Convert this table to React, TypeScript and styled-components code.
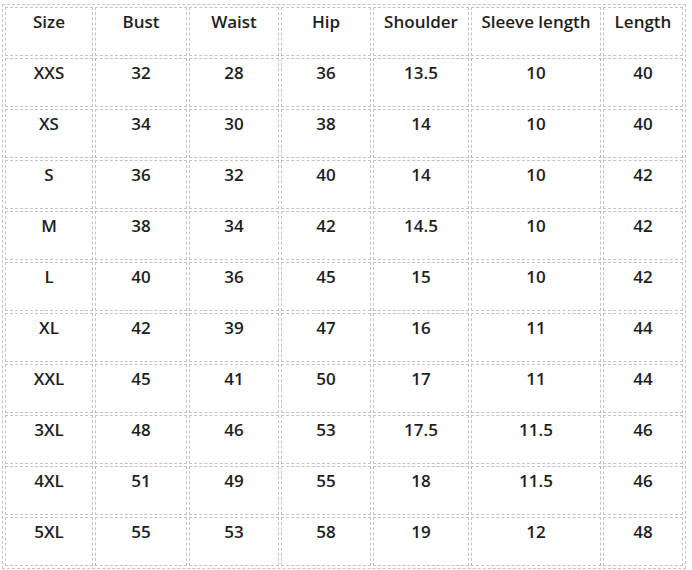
import styled, { createGlobalStyle } from 'styled-components'

const GlobalStyle = createGlobalStyle`
  html, body {
    margin: 0;
    padding: 0;
    background: #ffffff;
  }
  body {
    font-family: 'Open Sans', 'Noto Sans', sans-serif;
  }
`

const Page = styled.div`
  padding: 4px 0 0 2px;
`

const SizeTable = styled.table`
  width: 684px;
  table-layout: fixed;
  border: 1px dashed #c4c4c4;
  border-collapse: separate;
  border-spacing: 2px;
`

const Cell = styled.td<{ $w: number }>`
  width: ${(p) => p.$w}px;
  height: 49px;
  box-sizing: border-box;
  border: 1px dashed #c4c4c4;
  padding: 2px 0 0;
  vertical-align: top;
  text-align: center;
  font-size: 17px;
  font-weight: 600;
  line-height: 24px;
  color: #1e1e1e;
  white-space: nowrap;
`

const widths = [88, 92, 90, 90, 96, 130, 80]

const header = ['Size', 'Bust', 'Waist', 'Hip', 'Shoulder', 'Sleeve length', 'Length']

const rows: (string | number)[][] = [
  ['XXS', 32, 28, 36, 13.5, 10, 40],
  ['XS', 34, 30, 38, 14, 10, 40],
  ['S', 36, 32, 40, 14, 10, 42],
  ['M', 38, 34, 42, 14.5, 10, 42],
  ['L', 40, 36, 45, 15, 10, 42],
  ['XL', 42, 39, 47, 16, 11, 44],
  ['XXL', 45, 41, 50, 17, 11, 44],
  ['3XL', 48, 46, 53, 17.5, 11.5, 46],
  ['4XL', 51, 49, 55, 18, 11.5, 46],
  ['5XL', 55, 53, 58, 19, 12, 48],
]

export default function App() {
  return (
    <Page>
      <GlobalStyle />
      <SizeTable>
        <tbody>
          <tr>
            {header.map((h, i) => (
              <Cell key={h} $w={widths[i]}>
                {h}
              </Cell>
            ))}
          </tr>
          {rows.map((r) => (
            <tr key={r[0]}>
              {r.map((v, i) => (
                <Cell key={i} $w={widths[i]}>
                  {v}
                </Cell>
              ))}
            </tr>
          ))}
        </tbody>
      </SizeTable>
    </Page>
  )
}
